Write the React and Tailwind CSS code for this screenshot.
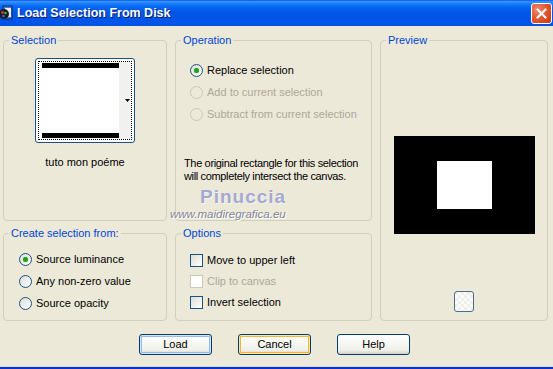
import React from 'react';

const font = { fontFamily: '"Liberation Sans", Arial, sans-serif' };

const Group = ({ label, className = '', children }) => (
  <fieldset className={`border border-[#d0d0bf] rounded-[4px] p-0 m-0 min-w-0 ${className}`}>
    <legend className="ml-[5px] px-[2px] text-[11px] leading-[13px] text-[#0046d5]">{label}</legend>
    {children}
  </fieldset>
);

const Radio = ({ checked, disabled, label }) => (
  <div className="flex items-center h-[22px]">
    <span
      className={`w-[13px] h-[13px] rounded-full border flex items-center justify-center ${
        disabled
          ? 'border-[#cac8bb] bg-transparent'
          : 'border-[#1c5180] bg-[linear-gradient(135deg,#dcdcd7,#ffffff)]'
      }`}
    >
      {checked && <span className="w-[5px] h-[5px] rounded-full bg-[#21a121] shadow-[0_0_1px_#5ecc5e]" />}
    </span>
    <span className={`ml-[4px] text-[11px] ${disabled ? 'text-[#aca899]' : 'text-black'}`}>{label}</span>
  </div>
);

const Check = ({ disabled, label }) => (
  <div className="flex items-center h-[21px]">
    <span
      className={`w-[13px] h-[13px] border ${
        disabled
          ? 'border-[#cac8bb] bg-white'
          : 'border-[#1c5180] bg-[linear-gradient(135deg,#dcdcd7,#ffffff)]'
      }`}
    />
    <span className={`ml-[4px] text-[11px] ${disabled ? 'text-[#aca899]' : 'text-black'}`}>{label}</span>
  </div>
);

const XPButton = ({ children, variant }) => (
  <button
    className={`w-[73px] h-[21px] rounded-[3px] border border-[#003c74] text-[11px] text-black bg-[linear-gradient(to_bottom,#ffffff,#f0f0ea_80%,#d6d0c5)] ${
      variant === 'default'
        ? 'shadow-[inset_0_0_0_1px_#cee7ff,inset_0_0_0_2px_#98b8ea]'
        : variant === 'focus'
        ? 'shadow-[inset_0_0_0_1px_#ffe7a2,inset_0_0_0_2px_#f8b330]'
        : ''
    }`}
  >
    {children}
  </button>
);

export default function App() {
  return (
    <div className="w-[553px] h-[369px] overflow-hidden bg-[#ece9d8] flex flex-col relative" style={font}>
      {/* Title bar */}
      <div className="h-[26px] flex items-center bg-[linear-gradient(to_bottom,#0058ee_0%,#3a93ff_6%,#1b7dfc_14%,#0565f2_28%,#0058e8_45%,#0054e3_70%,#0055eb_88%,#0050e0_100%)]">
        <svg width="14" height="16" viewBox="0 0 14 16" className="ml-[-1px]">
          <rect x="4" y="1" width="9" height="13" fill="#3f7dd6" stroke="#0a2a6a" />
          <rect x="6" y="3" width="6" height="9" fill="#e8f0ff" />
          <circle cx="5" cy="9" r="5" fill="#1a1a1a" />
          <circle cx="3.5" cy="7.5" r="1.4" fill="#e03030" />
          <circle cx="6.5" cy="8" r="1.3" fill="#30c040" />
          <circle cx="4.5" cy="11" r="1.3" fill="#3060ff" />
        </svg>
        <span className="ml-[4px] text-white font-bold text-[12.5px] [text-shadow:1px_1px_#0a1a70]">
          Load Selection From Disk
        </span>
        <div className="ml-auto mr-[1px] w-[21px] h-[21px] rounded-[3px] border border-white bg-[radial-gradient(circle_at_30%_30%,#f08a6a,#e0502a_55%,#c33818)] flex items-center justify-center">
          <svg width="11" height="11" viewBox="0 0 11 11">
            <path d="M1.5 1.5 L9.5 9.5 M9.5 1.5 L1.5 9.5" stroke="white" strokeWidth="2" strokeLinecap="square" />
          </svg>
        </div>
      </div>

      {/* Body */}
      <div className="grid grid-cols-[164px_197px_168px] grid-rows-[187px_94px] gap-x-[8px] gap-y-[6px] pl-[3px] pt-[8px]">
        <Group label="Selection" className="flex flex-col items-center">
          <div className="mt-[11px] w-[100px] h-[85px] rounded-[3px] border border-[#1c5180] bg-white p-[2px]">
            <div className="w-full h-full border border-dotted border-black flex relative">
              <div className="flex-1 flex flex-col justify-between py-[1px] pl-[3px]">
                <div className="h-[5px] bg-black" />
                <div className="h-[5px] bg-black" />
              </div>
              <div className="w-[12px] bg-[#f1f1ef] flex items-center justify-end pr-[1px]">
                <svg width="5" height="3" viewBox="0 0 5 3">
                  <path d="M0 0 H5 L2.5 3 Z" fill="black" />
                </svg>
              </div>
            </div>
          </div>
          <div className="mt-[11px] text-[11px] text-black">tuto mon poéme</div>
        </Group>

        <Group label="Operation">
          <div className="pl-[14px] mt-[12px]">
            <Radio checked label="Replace selection" />
            <Radio disabled label="Add to current selection" />
            <Radio disabled label="Subtract from current selection" />
          </div>
          <p className="pl-[8px] mt-[32px] whitespace-nowrap text-[11px] tracking-[-0.35px] leading-[13px] text-black">
            The original rectangle for this selection
            <br />
            will completely intersect the canvas.
          </p>
        </Group>

        <Group label="Preview" className="row-span-2 flex flex-col items-center">
          <div className="mt-[89px] w-[141px] h-[98px] bg-black flex items-center justify-center">
            <div className="w-[55px] h-[48px] bg-white" />
          </div>
          <div className="mt-[57px] w-[20px] h-[21px] rounded-[3px] border border-[#4b6d90] bg-[repeating-conic-gradient(#fbfbfa_0%_25%,#eeeeea_0%_50%)] bg-[length:6px_6px]" />
        </Group>

        <Group label="Create selection from:">
          <div className="pl-[15px] mt-[8px]">
            <Radio checked label="Source luminance" />
            <Radio label="Any non-zero value" />
            <Radio label="Source opacity" />
          </div>
        </Group>

        <Group label="Options">
          <div className="pl-[14px] mt-[10px]">
            <Check label="Move to upper left" />
            <Check disabled label="Clip to canvas" />
            <Check label="Invert selection" />
          </div>
        </Group>
      </div>

      {/* Watermark */}
      <div className="absolute left-[200px] top-[186px] text-[19px] leading-[22px] font-bold tracking-[1px] text-[#9ea3cf] opacity-90 [text-shadow:1px_1px_#f6f6fa]">
        Pinuccia
      </div>
      <div className="absolute left-[170px] top-[208px] text-[11.5px] leading-[13px] italic text-[#84849a] [text-shadow:1px_1px_#ffffff]">
        www.maidiregrafica.eu
      </div>

      {/* Buttons */}
      <div className="flex pl-[139px] gap-[26px] mt-[13px]">
        <XPButton variant="default">Load</XPButton>
        <XPButton variant="focus">Cancel</XPButton>
        <XPButton>Help</XPButton>
      </div>

      <div className="mt-auto h-[3px] bg-[#0831d9] border-t border-[#e0ddcc]" />
    </div>
  );
}
